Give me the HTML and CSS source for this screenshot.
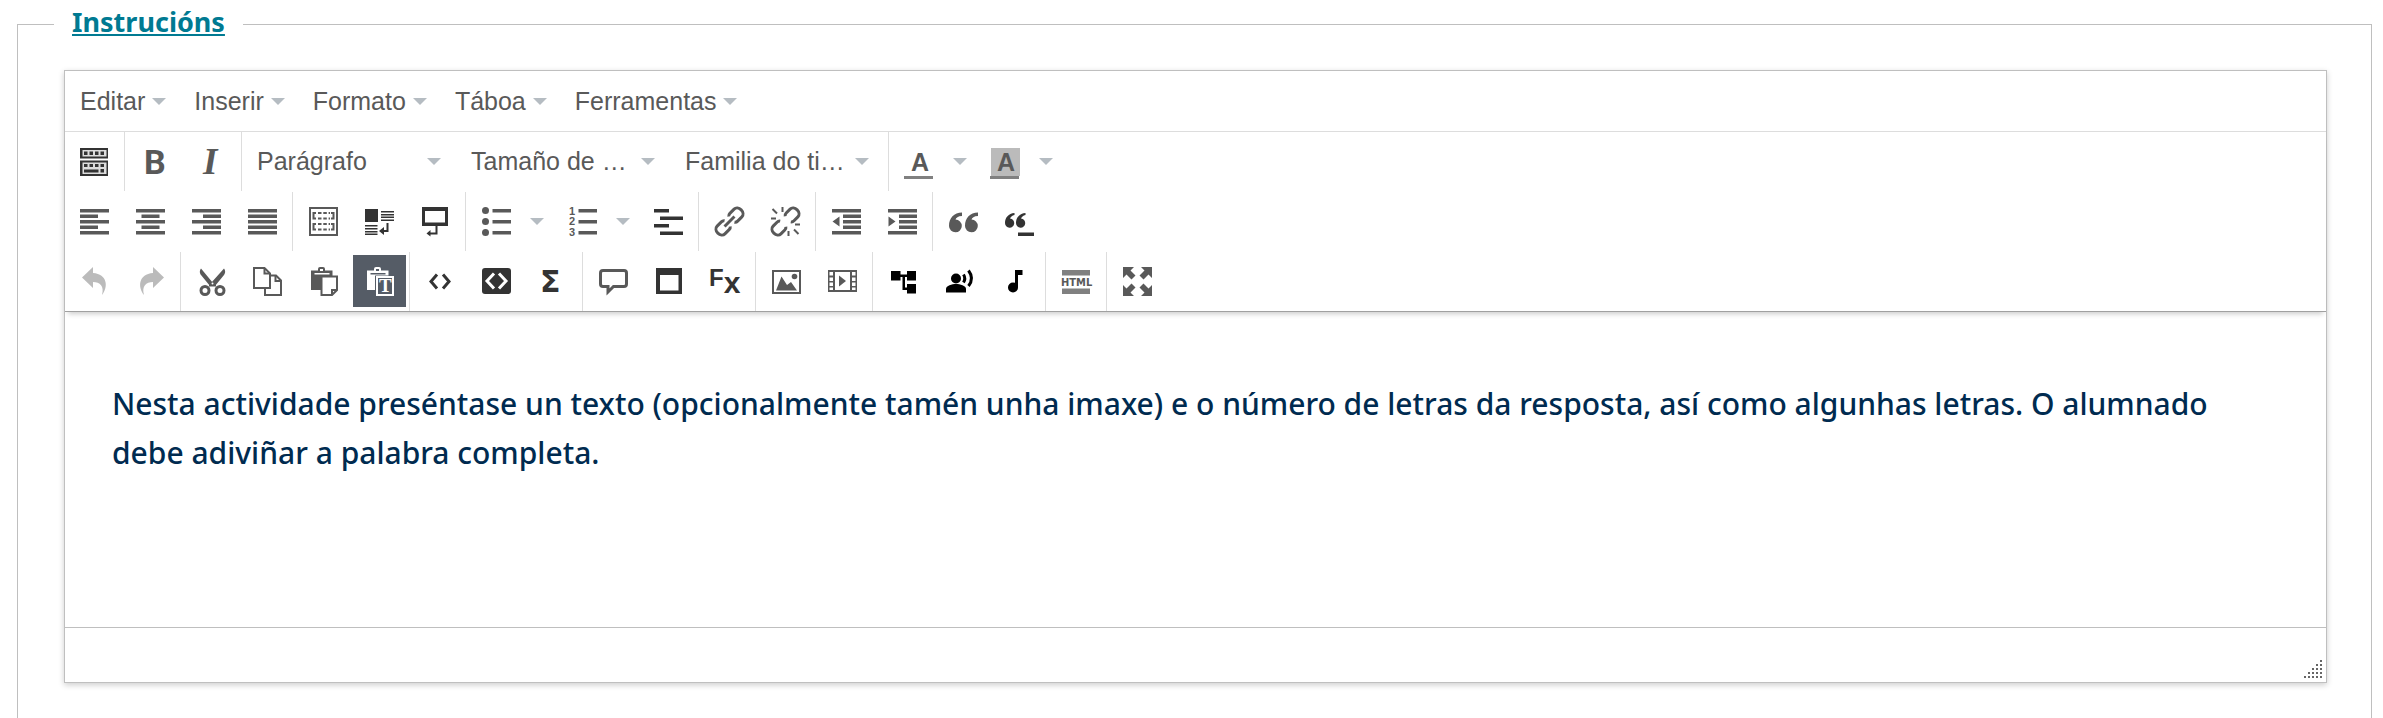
FILE: index.html
```
<!DOCTYPE html>
<html lang="gl">
<head>
    <meta charset="UTF-8">
    <meta name="viewport" content="width=device-width, initial-scale=1.0">
    <title>Instrucións</title>
    <link rel="stylesheet" href="styles.css">
</head>
<body>
    <fieldset class="instructions">
        <legend><a href="#editor">Instrucións</a></legend>

        <div class="editor">
            <!-- Menu bar -->
            <div class="menubar">
                <button class="menu-btn caret">Editar</button>
                <button class="menu-btn caret">Inserir</button>
                <button class="menu-btn caret">Formato</button>
                <button class="menu-btn caret">Táboa</button>
                <button class="menu-btn caret">Ferramentas</button>
            </div>

            <div class="toolbars">
                <!-- Row 1 -->
                <div class="toolbar">
                    <div class="group">
                        <button class="btn dark" aria-label="Barras de ferramentas">
                            <svg viewBox="0 0 29 29">
                                <path d="M0 1h28v10.500H0zM0 13.500h28v15.500H0z"/>
                                <path fill="#ddd" d="M2.500 3h24v6.500h-24zM2.500 15.500h24v11.500h-24z"/>
                                <path d="M4 4.500h3.500v3.500H4zM9.500 4.500H13v3.500H9.500zM15 4.500h3.500v3.500H15zM20.500 4.500H24v3.500h-3.500zM4 17h3.500v3H4zM9.500 17H13v3H9.500zM15 17h3.500v3H15zM20.500 17H24v3h-3.500zM4 22.500h14.500v3H4zM20.500 22H24v3.500h-3.500z"/>
                            </svg>
                        </button>
                    </div>
                    <div class="group">
                        <button class="btn" aria-label="Negra">
                            <svg viewBox="0 0 29 29"><text class="glyph-bold" x="3" y="27">B</text></svg>
                        </button>
                        <button class="btn" aria-label="Cursiva">
                            <svg viewBox="0 0 29 29"><text class="glyph-italic" x="6" y="27">I</text></svg>
                        </button>
                    </div>
                    <div class="group">
                        <label class="listbox caret"><select aria-label="Formato"><option>Parágrafo</option></select></label>
                        <label class="listbox caret"><select aria-label="Tamaño"><option>Tamaño de …</option></select></label>
                        <label class="listbox caret"><select aria-label="Familia"><option>Familia do ti…</option></select></label>
                    </div>
                    <div class="group">
                        <button class="btn split caret" aria-label="Cor do texto">
                            <svg viewBox="0 0 29 29">
                                <text class="glyph-a" x="6" y="24">A</text>
                                <path fill="#808080" d="M-1 29h29v3H-1z"/>
                            </svg>
                        </button>
                        <button class="btn split caret" aria-label="Cor de fondo">
                            <svg viewBox="0 0 29 29">
                                <path fill="#bbb" d="M0 1h29v28H0z"/>
                                <text class="glyph-a" x="6" y="24">A</text>
                                <path fill="#808080" d="M-1 29h29v3H-1z"/>
                            </svg>
                        </button>
                    </div>
                </div>

                <!-- Row 2 -->
                <div class="toolbar">
                    <div class="group">
                        <button class="btn" aria-label="Aliñar á esquerda">
                            <svg viewBox="0 0 29 29"><path d="M0 2h29v3.500H0zM0 7.500h18V11H0zM0 13h29v3.500H0zM0 18.500h18V22H0zM0 24h29v3.500H0z"/></svg>
                        </button>
                        <button class="btn" aria-label="Centrar">
                            <svg viewBox="0 0 29 29"><path d="M0 2h29v3.500H0zM5.500 7.500h18V11h-18zM0 13h29v3.500H0zM5.500 18.500h18V22h-18zM0 24h29v3.500H0z"/></svg>
                        </button>
                        <button class="btn" aria-label="Aliñar á dereita">
                            <svg viewBox="0 0 29 29"><path d="M0 2h29v3.500H0zM11 7.500h18V11H11zM0 13h29v3.500H0zM11 18.500h18V22H11zM0 24h29v3.500H0z"/></svg>
                        </button>
                        <button class="btn" aria-label="Xustificar">
                            <svg viewBox="0 0 29 29"><path d="M0 2h29v3.500H0zM0 7.500h29V11H0zM0 13h29v3.500H0zM0 18.500h29V22H0zM0 24h29v3.500H0z"/></svg>
                        </button>
                    </div>
                    <div class="group">
                        <button class="btn" aria-label="Mostrar bloques">
                            <svg viewBox="0 0 29 29">
                                <path class="line" d="M1 1h27v27H1z"/>
                                <path class="line" d="M7 6H4.500v5.500H7M22 6h2.500v5.500H22M7 17H4.500v5.500H7M22 17h2.500v5.500H22"/>
                                <path class="line" stroke-dasharray="3.500 1.800" d="M9 6h12M9 11.500h12M9 17h12M9 22.500h12"/>
                            </svg>
                        </button>
                        <button class="btn dark" aria-label="Modelo">
                            <svg viewBox="0 0 29 29">
                                <path d="M0 2h13v13H0zM16 4h13v1.500H16zM16 7h13v1.500H16zM16 9.500h13V11H16zM16 12.500h13V14H16zM0 18h12.500v1.500H0zM0 21h12.500v1.500H0zM0 24h12.500v1.500H0zM0 26.500h12.500V28H0z"/>
                                <path class="line" d="M22.500 16v8H18"/>
                                <path d="M14 24l5-4v8z"/>
                            </svg>
                        </button>
                        <button class="btn dark" aria-label="Inserir liña">
                            <svg viewBox="0 0 29 29">
                                <path fill-rule="evenodd" d="M1 0h26v19H1zM4 4v11.500h20V4z"/>
                                <path class="line" d="M15.500 19v7.500H8"/>
                                <path d="M5.500 26.500l4-3.500v6.500z"/>
                            </svg>
                        </button>
                    </div>
                    <div class="group">
                        <button class="btn split caret" aria-label="Viñetas">
                            <svg viewBox="0 0 29 29">
                                <circle cx="3.500" cy="3.500" r="3.500"/><circle cx="3.500" cy="14.500" r="3.500"/><circle cx="3.500" cy="25.500" r="3.500"/>
                                <path d="M10.500 2H29v3.500H10.500zM10.500 13H29v3.500H10.500zM10.500 24H29v3.500H10.500z"/>
                            </svg>
                        </button>
                        <button class="btn split caret" aria-label="Lista numerada">
                            <svg viewBox="0 0 29 29">
                                <text class="glyph-num" x="1" y="8">1</text><text class="glyph-num" x="1" y="18">2</text><text class="glyph-num" x="1" y="29">3</text>
                                <path d="M10.500 2H29v3.500H10.500zM10.500 13H29v3.500H10.500zM10.500 24H29v3.500H10.500z"/>
                            </svg>
                        </button>
                        <button class="btn dark" aria-label="Lista de definicións">
                            <svg viewBox="0 0 29 29"><path d="M0 2h15v3.500H0zM6 9.500h23V13H6zM0 17h15v3.500H0zM6 24.500h23V28H6z"/></svg>
                        </button>
                    </div>
                    <div class="group">
                        <button class="btn" aria-label="Ligazón">
                            <svg viewBox="0 0 29 29">
                                <g class="line thick" transform="rotate(-45 14.500 14.500)">
                                    <path d="M11.500 18.500q-1 1.500-3 1.500H2.500a4.500 5.500 0 0 1 0-11h6q2 0 3 1.500M17.500 10.500q1-1.500 3-1.500h6a4.500 5.500 0 0 1 0 11h-6q-2 0-3-1.500M7.500 14.500h14"/>
                                </g>
                            </svg>
                        </button>
                        <button class="btn" aria-label="Quitar ligazón">
                            <svg viewBox="0 0 29 29">
                                <g class="line thick" transform="rotate(-45 14.500 14.500)">
                                    <path d="M11 18.500q-1 1.500-3 1.500H2.500a4.500 5.500 0 0 1 0-11H8q2 0 3 1.500M18 10.500q1-1.500 3-1.500h5.500a4.500 5.500 0 0 1 0 11H21q-2 0-3-1.500"/>
                                </g>
                                <path class="line" d="M0 11.500h5M1.500 2L6 6.500M11.500 0v5M24 17.500h5M23 22.500l4.500 4.500M17.500 24v5"/>
                            </svg>
                        </button>
                    </div>
                    <div class="group">
                        <button class="btn" aria-label="Reducir sangría">
                            <svg viewBox="0 0 29 29"><path d="M0 2h29v3.500H0zM11 7.500h18V11H11zM11 13h18v3.500H11zM11 18.500h18V22H11zM0 24h29v3.500H0zM7.500 9.500v10l-7-5z"/></svg>
                        </button>
                        <button class="btn" aria-label="Aumentar sangría">
                            <svg viewBox="0 0 29 29"><path d="M0 2h29v3.500H0zM11 7.500h18V11H11zM11 13h18v3.500H11zM11 18.500h18V22H11zM0 24h29v3.500H0zM.5 9.500v10l7-5z"/></svg>
                        </button>
                    </div>
                    <div class="group">
                        <button class="btn" aria-label="Cita">
                            <svg viewBox="0 0 29 29"><path d="M13 5.500v3.500c-4 0-6 2-6.500 3.500A6.400 6.400 0 1 1 0 19C0 11 5 5.500 13 5.500zM29 5.500v3.500c-4 0-6 2-6.500 3.500A6.400 6.400 0 1 1 16 19c0-8 5-13.500 13-13.500z"/></svg>
                        </button>
                        <button class="btn dark" aria-label="Cita con autoría">
                            <svg viewBox="0 0 29 29"><path d="M9.500 6v2C7 8.500 5.500 10 5 11.500A4.600 4.600 0 1 1 0 16C0 10.500 3.500 6.500 9.500 6zM20.500 6v2c-2.500.5-4 2-4.500 3.500A4.600 4.600 0 1 1 11 16c0-5.500 3.500-9.500 9.500-10zM13 25.500h16v3.500H13z"/></svg>
                        </button>
                    </div>
                </div>

                <!-- Row 3 -->
                <div class="toolbar">
                    <div class="group">
                        <button class="btn disabled" aria-label="Desfacer">
                            <svg viewBox="0 0 29 29"><path d="M13 0L2 10.500 13 21v-6c7 0 11.500 4 9 13 6.500-8 5.500-21-9-22z"/></svg>
                        </button>
                        <button class="btn disabled" aria-label="Refacer">
                            <svg viewBox="0 0 29 29"><path d="M17 0l11 10.500L17 21v-6c-7 0-11.500 4-9 13C1.500 20 2.500 7 17 6z"/></svg>
                        </button>
                    </div>
                    <div class="group">
                        <button class="btn" aria-label="Cortar">
                            <svg viewBox="0 0 29 29">
                                <path d="M4 1.500c-2 3-1 5 0 6.500l9 11 3-3zM27 1.500c2 3 1 5 0 6.500l-9 11-4-3z"/>
                                <path d="M12 15h7v4.500h-7z"/>
                                <circle class="line thick" cx="8" cy="23.500" r="4"/><circle class="line thick" cx="23" cy="23.500" r="4"/>
                                <circle fill="#fff" cx="15.500" cy="16.500" r="1"/>
                            </svg>
                        </button>
                        <button class="btn" aria-label="Copiar">
                            <svg viewBox="0 0 29 29">
                                <path class="line sheet" d="M12 8.500h11l5 5V28H12z"/>
                                <path class="line" d="M22.500 8.500V14H28"/>
                                <path class="line sheet" d="M1 1h10.500L17 6.500V21H1z"/>
                                <path class="line" d="M11.500 1v5.500H17"/>
                            </svg>
                        </button>
                        <button class="btn" aria-label="Pegar">
                            <svg viewBox="0 0 29 29">
                                <path d="M2 3.500h7V2q0-2 2-2h3q2 0 2 2v1.500h7.500V23H2z"/>
                                <path fill="#fff" d="M11 2h3v2h-3zM5.500 6h15v1.500h-15z"/>
                                <path class="line sheet" d="M12.500 9.500H28V23l-5 5H12.500z"/>
                                <path class="line" d="M28 23h-5v5"/>
                            </svg>
                        </button>
                        <button class="btn active" aria-label="Pegar como texto" aria-pressed="true">
                            <svg viewBox="0 0 29 29">
                                <path d="M2 3.500h7V2q0-2 2-2h3q2 0 2 2v1.500h7.500V23H2z"/>
                                <path fill="#555c66" d="M11 2h3v2h-3zM5.500 6h15v1.500h-15zM10 8.500h19V29H10z"/>
                                <path class="line" d="M12 10h16v18H12z"/>
                                <text class="glyph-t" x="14" y="25">T</text>
                            </svg>
                        </button>
                    </div>
                    <div class="group">
                        <button class="btn dark" aria-label="Código">
                            <svg viewBox="0 0 29 29"><path class="line thick" d="M11 7.500L5 14.500l6 7M17 7.500l6 7-6 7"/></svg>
                        </button>
                        <button class="btn dark" aria-label="Código fonte">
                            <svg viewBox="0 0 29 29">
                                <rect y="1" width="29" height="26" rx="3"/>
                                <path class="line thick light" d="M12 6.500L5 14l7 7.500M17 6.500l7 7.500-7 7.500"/>
                            </svg>
                        </button>
                        <button class="btn dark" aria-label="Fórmula">
                            <svg viewBox="0 0 29 29"><text class="glyph-sigma" x="2" y="25">Σ</text></svg>
                        </button>
                    </div>
                    <div class="group">
                        <button class="btn" aria-label="Comentario">
                            <svg viewBox="0 0 29 29"><path class="line thick" d="M4 3.500h21q2.500 0 2.500 2.500v11q0 2.500-2.500 2.500H14.500L9 25v-5.500H4Q1.500 19.500 1.500 17V6Q1.500 3.500 4 3.500z"/></svg>
                        </button>
                        <button class="btn dark" aria-label="Xanela">
                            <svg viewBox="0 0 29 29"><path fill-rule="evenodd" d="M1 1h26v26H1zM5 8v15.500h18.500V8z"/></svg>
                        </button>
                        <button class="btn dark" aria-label="Efectos">
                            <svg viewBox="0 0 29 29"><text class="glyph-f" x="-2" y="19">F<tspan class="glyph-x" dy="7">x</tspan></text></svg>
                        </button>
                    </div>
                    <div class="group">
                        <button class="btn" aria-label="Imaxe">
                            <svg viewBox="0 0 29 29">
                                <path class="line" d="M1 4h27v22H1z"/>
                                <path d="M4 23.500L9.500 9.500 15 18l4-3 6 8.500z"/><circle cx="22.500" cy="9.500" r="2.800"/>
                            </svg>
                        </button>
                        <button class="btn" aria-label="Vídeo">
                            <svg viewBox="0 0 29 29">
                                <path fill-rule="evenodd" d="M0 3h29v22H0zM1.500 5v3.500H5V5zM1.500 10.500V14H5v-3.500zM1.500 15.500V19H5v-3.500zM1.500 20.500V23H5v-2.500zM24 5v3.500h3.500V5zM24 10.500V14h3.500v-3.500zM24 15.500V19h3.500v-3.500zM24 20.500V23h3.500v-2.500zM7 5v18h15V5z"/>
                                <path d="M11 8.500v11l7-5.500z"/>
                            </svg>
                        </button>
                    </div>
                    <div class="group">
                        <button class="btn black" aria-label="Mapa">
                            <svg viewBox="0 0 29 29"><path d="M2 4h9.500v3.500H18V4h9v9.500h-9V10h-2v10.500h2V17h9v9.500h-9V23h-4.500V10h-2v3.500H2z"/></svg>
                        </button>
                        <button class="btn black" aria-label="Voz">
                            <svg viewBox="0 0 29 29">
                                <circle cx="11" cy="11.500" r="5"/>
                                <path d="M1 25.500V22c0-3.500 6-5 10-5s10 1.500 10 5v3.500z"/>
                                <path class="line thick" d="M18.500 7.500q2.500 4 0 8M23.500 3.500q6 8 0 15.500"/>
                            </svg>
                        </button>
                        <button class="btn black" aria-label="Son">
                            <svg viewBox="0 0 29 29"><circle cx="12" cy="20.500" r="5"/><path d="M14 3h7.500v5H17v12.500h-3z"/></svg>
                        </button>
                    </div>
                    <div class="group">
                        <button class="btn" aria-label="Editar HTML">
                            <svg viewBox="0 0 29 29">
                                <path fill="#808080" d="M0 3h28v5.500H0zM0 21.500h28V27H0z"/>
                                <text class="glyph-html" x="-1" y="19">HTML</text>
                            </svg>
                        </button>
                    </div>
                    <div class="group">
                        <button class="btn" aria-label="Pantalla completa">
                            <svg viewBox="0 0 29 29"><path d="M0 0h11L7.500 3.500l5 5-4 4-5-5L0 11zM29 0v11l-3.500-3.500-5 5-4-4 5-5L18 0zM29 29H18l3.500-3.500-5-5 4-4 5 5L29 18zM0 29V18l3.500 3.500 5-5 4 4-5 5L11 29z"/></svg>
                        </button>
                    </div>
                </div>
            </div>

            <textarea class="content" id="editor" aria-label="Instrucións" spellcheck="false">Nesta actividade preséntase un texto (opcionalmente tamén unha imaxe) e o número de letras da resposta, así como algunhas letras. O alumnado debe adiviñar a palabra completa.</textarea>

            <div class="statusbar">
                <svg class="resize" viewBox="0 0 18 18"><path d="M16 0h2v2h-2zM12 4h2v2h-2zM16 4h2v2h-2zM8 8h2v2H8zM12 8h2v2h-2zM16 8h2v2h-2zM4 12h2v2H4zM8 12h2v2H8zM12 12h2v2h-2zM16 12h2v2h-2zM0 16h2v2H0zM4 16h2v2H4zM8 16h2v2H8zM12 16h2v2h-2zM16 16h2v2h-2z"/></svg>
            </div>
        </div>
    </fieldset>
</body>
</html>
```
FILE: styles.css
```
:root {
    --text-color: #595959;
    --dark-color: #333;
    --border-color: #bfbfbf;
    --line-color: #ddd;
    --caret-color: #b5bcc2;
    --link-color: #007a92;
    --content-color: #002b50;
}

* {
    box-sizing: border-box;
    margin: 0;
    padding: 0;
}

body {
    display: flex;
    min-height: 100vh;
    background-color: #fff;
    color: var(--text-color);
    font-family: "Liberation Sans", Arial, sans-serif;
    font-size: 25px;
}

.instructions {
    flex: 1;
    min-width: 0;
    margin: 4px 11px 0 17px;
    padding: 26px 44px 34px 0;
    border: 1px solid var(--border-color);
    border-bottom: none;
}

legend {
    margin-left: 36px;
    padding: 0 18px 4px;
    font-family: "Noto Sans", sans-serif;
    font-size: 27px;
    font-weight: bold;
    line-height: 36px;
}

legend a {
    color: var(--link-color);
    text-decoration-thickness: 2px;
    text-underline-offset: 2px;
    text-decoration-skip-ink: none;
}

.editor {
    margin-left: 46px;
    border: 1px solid var(--border-color);
    box-shadow: 0 2px 6px rgba(0, 0, 0, 0.2);
}

button,
select {
    border: none;
    background: none;
    color: inherit;
    font: inherit;
    cursor: pointer;
}

/* Menu bar */
.menubar {
    display: flex;
    height: 61px;
    padding-left: 1px;
    border-bottom: 1px solid var(--line-color);
}

.menu-btn {
    display: flex;
    align-items: center;
    gap: 7px;
    padding: 0 14px;
}

.caret::after {
    content: "";
    border: 7px solid transparent;
    border-top-color: var(--caret-color);
    border-bottom: none;
}

/* Toolbars */
.toolbars {
    display: flex;
    flex-direction: column;
    gap: 1px;
    position: relative;
    border-bottom: 1px solid #a0a0a0;
    box-shadow: 0 5px 5px -3px rgba(0, 0, 0, 0.2);
}

.toolbar {
    display: flex;
    height: 59px;
}

.group {
    display: flex;
    align-items: flex-start;
    gap: 3px;
    padding: 3px 3px 0 4px;
    border-left: 1px solid var(--line-color);
}

.group:first-child {
    padding-left: 3px;
    border-left: none;
}

.btn {
    display: flex;
    align-items: center;
    width: 53px;
    height: 52px;
    padding: 0 12px;
    fill: currentColor;
}

.btn svg {
    flex: none;
    width: 29px;
    height: 29px;
    overflow: visible;
}

.split {
    gap: 19px;
    width: 83px;
}

.dark {
    color: var(--dark-color);
}

.black {
    color: #000;
}

.disabled {
    color: #bbb;
}

.active {
    background-color: #555c66;
    color: #fff;
}

.listbox {
    display: flex;
    align-items: center;
    width: 211px;
    height: 52px;
    padding: 0 16px 0 11px;
}

.listbox select {
    flex: 1;
    min-width: 0;
    height: 100%;
    appearance: none;
}

/* Icon strokes and letters */
.line {
    fill: none;
    stroke: currentColor;
    stroke-width: 2;
}

.thick {
    stroke-width: 3;
}

.light {
    stroke: #fff;
}

.sheet {
    fill: #fff;
}

.glyph-bold {
    font: bold 34px Roboto, sans-serif;
}

.glyph-italic {
    font: italic bold 37px "Liberation Serif", serif;
}

.glyph-a {
    font: bold 25px "Liberation Sans", sans-serif;
}

.glyph-num {
    font: bold 11px "Liberation Sans", sans-serif;
}

.glyph-t {
    font: bold 19px "Liberation Serif", serif;
}

.glyph-sigma {
    font: bold 30px "DejaVu Sans", sans-serif;
}

.glyph-f {
    font: bold 24px "Liberation Sans", sans-serif;
}

.glyph-x {
    font-size: 30px;
}

.glyph-html {
    font: bold 11px "DejaVu Sans Condensed", sans-serif;
}

/* Editing area */
.content {
    display: block;
    width: 100%;
    height: 315px;
    padding: 67px 47px 0;
    border: none;
    outline: none;
    resize: none;
    background-color: #fff;
    color: var(--content-color);
    font-family: "Noto Sans", sans-serif;
    font-size: 30px;
    font-weight: 500;
    line-height: 49px;
}

.statusbar {
    display: flex;
    align-items: flex-end;
    justify-content: flex-end;
    height: 55px;
    padding: 4px;
    border-top: 1px solid var(--border-color);
}

.resize {
    width: 18px;
    height: 18px;
    fill: #666;
}
```
